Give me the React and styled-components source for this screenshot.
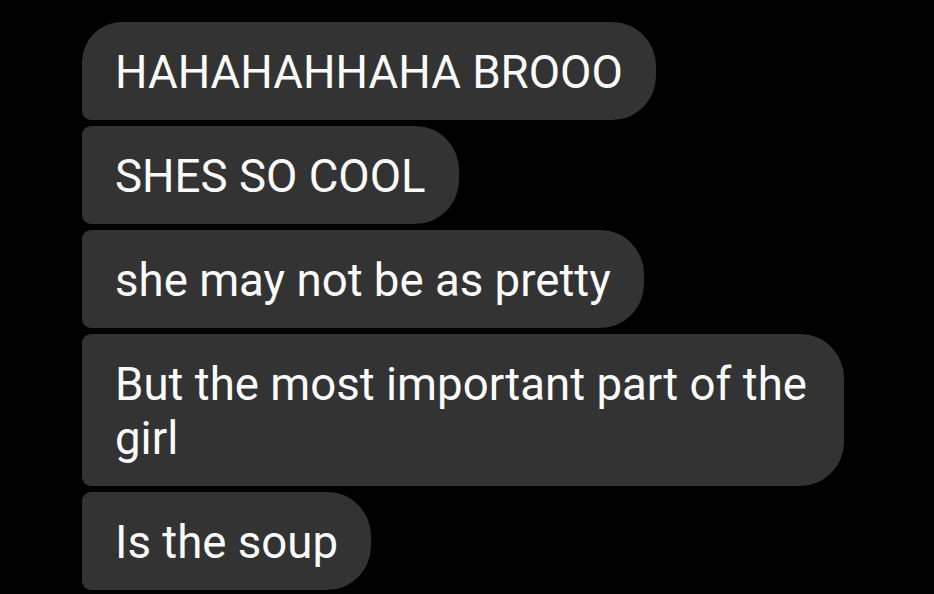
import styled, { createGlobalStyle } from "styled-components";

const messages = [
  "HAHAHAHHAHA BROOO",
  "SHES SO COOL",
  "she may not be as pretty",
  "But the most important part of the girl",
  "Is the soup",
];

function App() {
  return (
    <>
      <GlobalStyle />
      <Thread>
        {messages.map((text, i) => (
          <Bubble key={i} $first={i === 0}>
            {text}
          </Bubble>
        ))}
      </Thread>
    </>
  );
}

const GlobalStyle = createGlobalStyle`
  html, body {
    margin: 0;
    background: #000;
  }
`;

const Thread = styled.div`
  display: flex;
  flex-direction: column;
  align-items: flex-start;
  gap: 6px;
  padding: 22px 0 0 82px;
  min-height: 594px;
  box-sizing: border-box;
  background: #000;
`;

const Bubble = styled.div`
  box-sizing: border-box;
  max-width: 762px;
  padding: 24px 33px 20px 33px;
  background: #333333;
  color: #fafafa;
  font-family: Roboto, "Noto Sans", sans-serif;
  font-size: 45.6px;
  line-height: 54px;
  border-radius: ${(props) => (props.$first ? "40px" : "9px")} 44px 44px 9px;
`;

export default App;
